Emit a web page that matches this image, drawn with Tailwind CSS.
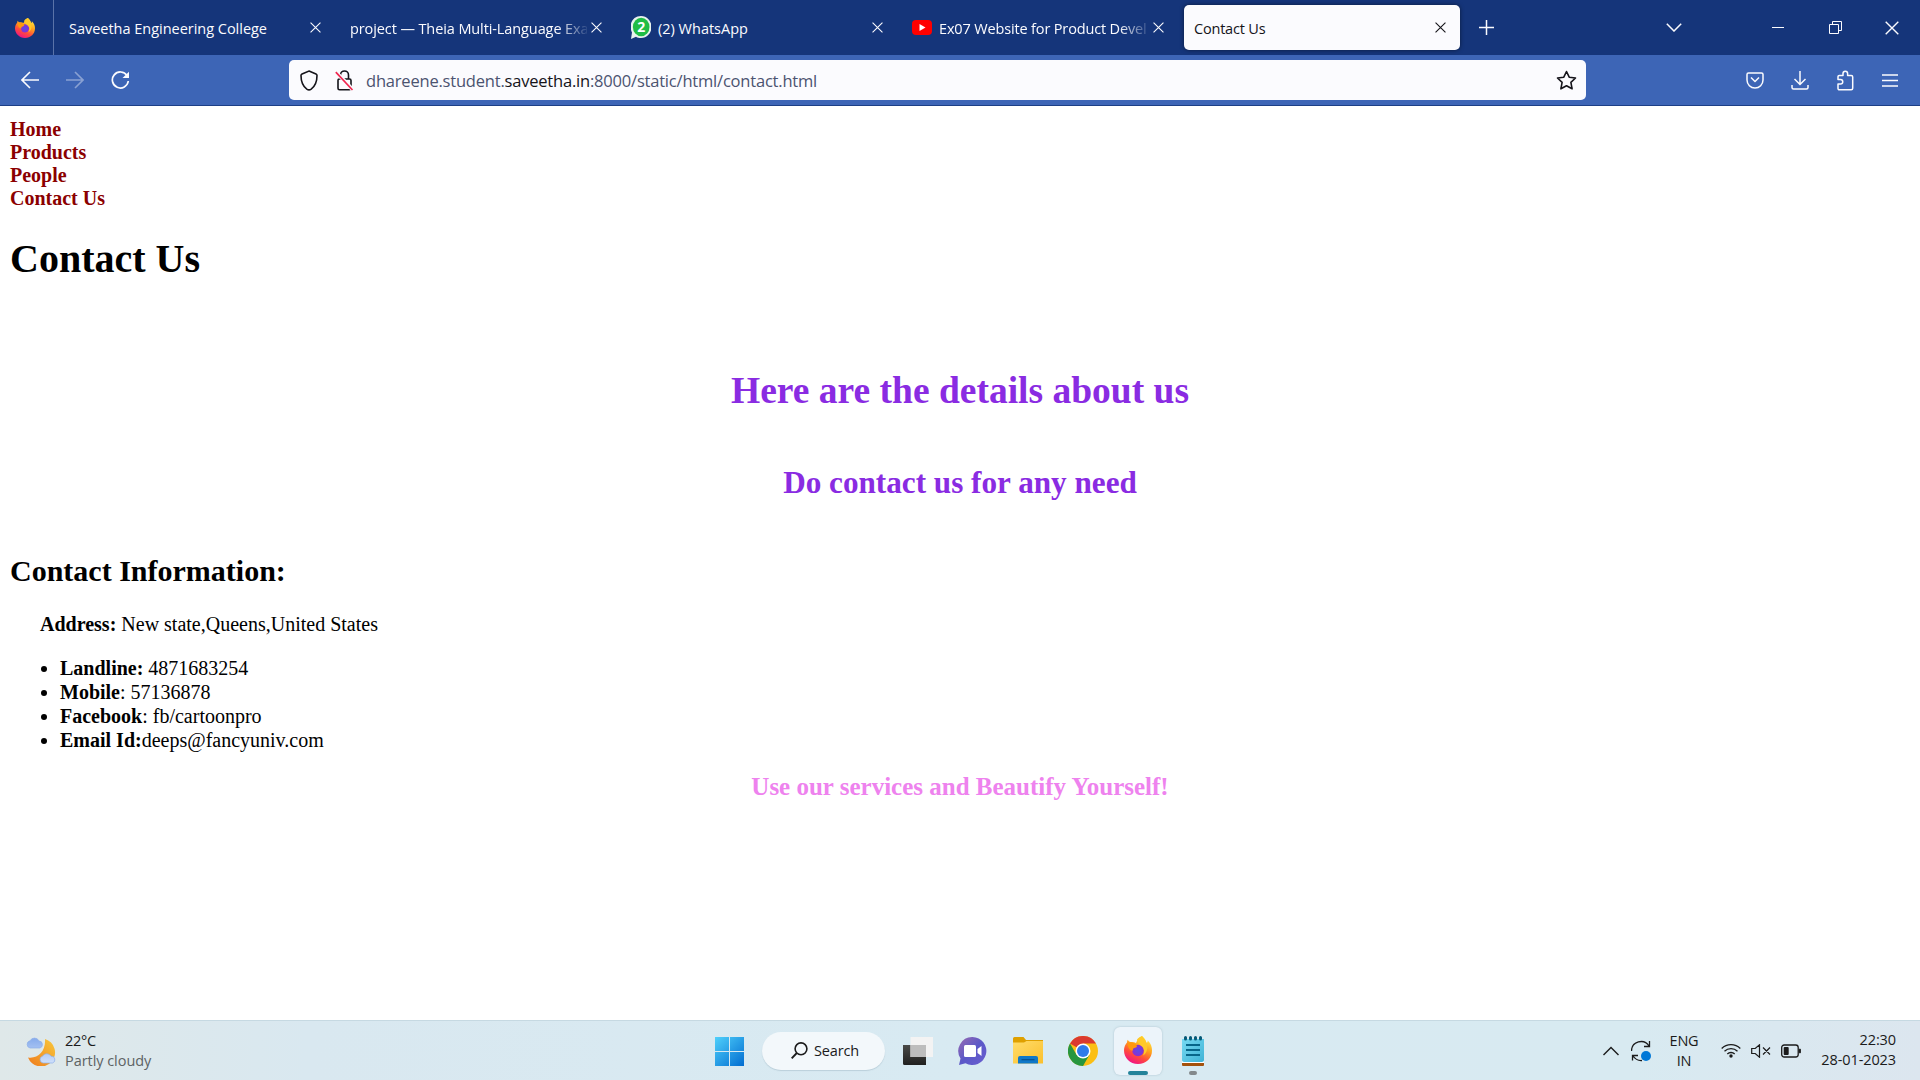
<!DOCTYPE html>
<html lang="en">
<head>
<meta charset="utf-8">
<title>Contact Us</title>
<script src="https://cdn.jsdelivr.net/npm/@tailwindcss/browser@4"></script>
</head>
<body class="flex h-screen w-screen flex-col overflow-hidden bg-white font-['Open_Sans',sans-serif] text-black">

<svg class="absolute size-0">
  <defs>
    <linearGradient id="fo" x1=".8" y1="0" x2=".3" y2="1"><stop offset="0" stop-color="#fff44f"/><stop offset=".4" stop-color="#ffa41c"/><stop offset=".7" stop-color="#ff4a3c"/><stop offset="1" stop-color="#f0108a"/></linearGradient>
    <radialGradient id="fp"><stop offset="0" stop-color="#5b4be8"/><stop offset="1" stop-color="#8a2fd0"/></radialGradient>
    <linearGradient id="win" gradientUnits="userSpaceOnUse" x1="1" y1="1" x2="28" y2="30"><stop offset="0" stop-color="#4fd0fb"/><stop offset="1" stop-color="#0470d2"/></linearGradient>
    <linearGradient id="chat" x1="0" y1="0" x2="1" y2="1"><stop offset="0" stop-color="#9a6bb0"/><stop offset=".5" stop-color="#5b58c8"/><stop offset="1" stop-color="#6a5fd0"/></linearGradient>
    <linearGradient id="fold" x1="0" y1="0" x2="1" y2="1"><stop offset="0" stop-color="#ffdc6a"/><stop offset="1" stop-color="#fbc02d"/></linearGradient>
    <linearGradient id="moon" x1="1" y1="0" x2="0" y2="1"><stop offset="0" stop-color="#f8c93c"/><stop offset="1" stop-color="#ef7a1c"/></linearGradient>
    <linearGradient id="cloud" x1="0" y1="0" x2="0" y2="1"><stop offset="0" stop-color="#86abec"/><stop offset="1" stop-color="#cfe0fb"/></linearGradient>
    <linearGradient id="note" x1="0" y1="0" x2="1" y2="1"><stop offset="0" stop-color="#76d9f2"/><stop offset="1" stop-color="#3fb3d6"/></linearGradient>
    <linearGradient id="tvd" x1="0" y1="0" x2="0" y2="1"><stop offset="0" stop-color="#4a4a48"/><stop offset="1" stop-color="#20201f"/></linearGradient>
    <symbol id="x" viewBox="0 0 10 10"><path d="M.5.5l9 9M9.500.5l-9 9" fill="none" stroke="currentColor" stroke-width="1"/></symbol>
    <symbol id="firefox" viewBox="0 0 28 28">
      <path d="M18 0c3 2.500 4 4.500 4.500 7 1-.5 1.200-1.500 1.200-2.500C27 7.500 28 11 28 14.500 28 22.500 22 28 14 28S0 22 0 14.500C0 11 1.500 8 3 6.500c0-1 .3-2 .8-2.700.5 1.300 1.500 2 2.700 2.300 2-.3 4 0 5.500 1 1-3 3-5.500 6-7.100z" fill="url(#fo)"/>
      <circle cx="14" cy="14.500" r="5.800" fill="url(#fp)"/>
      <path d="M3.500 7.500c3-2 7-1 9 1.700 1 1.200 0 2.300-1.500 2.600-2 .3-2.500 1.500-1.800 2.700C6 15 4 12 3.500 7.500z" fill="#ff980e"/>
      <path d="M13 3.500C14 2 16 .7 18 0c2 2.500 4.500 5 5.200 9 .7 5-1.200 9-4.200 10.500 2-3.500 1.200-7.500-1.500-9.500-2.500-1.500-4-3.500-4.500-6.500z" fill="#ffc928"/>
    </symbol>
  </defs>
</svg>

<!-- Tab strip -->
<header class="flex h-[55px] shrink-0 items-center bg-[#15357a] text-[14.5px] text-[#fbfbfe]">
  <div class="flex h-full w-[54px] items-center border-r border-[#5a73a8] pl-[15px]"><svg class="size-5"><use href="#firefox"/></svg></div>
  <div class="ml-1.5 flex items-center">
    <div class="flex w-[281px] items-center pl-[9px]">
      <span class="w-[236px] pt-0.5 whitespace-nowrap tracking-[-0.02px]">Saveetha Engineering College</span>
      <svg class="ml-[5px] size-[11px]"><use href="#x"/></svg>
    </div>
    <div class="flex w-[281px] items-center pl-[9px]">
      <span class="w-[237px] overflow-hidden pt-0.5 whitespace-nowrap tracking-[-0.1px] [mask-image:linear-gradient(90deg,#000_208px,transparent_240px)]">project — Theia Multi-Language Exa</span>
      <svg class="ml-1 size-[11px]"><use href="#x"/></svg>
    </div>
    <div class="flex w-[281px] items-center pl-[9px]">
      <svg class="mr-[7px] h-6 w-5" viewBox="0 0 20 24"><path d="M10 0a10.500 11 0 0 1 0 22c-2 0-3.500-.3-5-1.300L0 23l1-6.500C-3 8 2 0 10 0z" fill="#e8f2ee"/><ellipse cx="10.200" cy="11" rx="8.300" ry="9.300" fill="#20bd45"/><text x="6.300" y="16" font-size="14" font-weight="700" fill="#fff">2</text></svg>
      <span class="w-[209px] pt-0.5 whitespace-nowrap">(2) WhatsApp</span>
      <svg class="ml-[5px] size-[11px]"><use href="#x"/></svg>
    </div>
    <div class="flex w-[281px] items-center pl-[9px]">
      <svg class="mr-[7px] h-[15px] w-5" viewBox="0 0 20 15"><rect width="20" height="15" rx="4" fill="#f00"/><path d="M7.500 4l6 3.500-6 3.500z" fill="#fff"/></svg>
      <span class="w-[210px] overflow-hidden pt-0.5 whitespace-nowrap tracking-[-0.15px] [mask-image:linear-gradient(90deg,#000_180px,transparent_213px)]">Ex07 Website for Product Devel</span>
      <svg class="ml-1 size-[11px]"><use href="#x"/></svg>
    </div>
    <div class="flex h-[45px] w-[276px] items-center rounded-[5px] bg-[#fbfbfe] pl-2.5 text-[#15141a] shadow-[0_0_4px_rgba(0,0,0,.5)]">
      <span class="w-[236px] pt-0.5 tracking-[-0.2px]">Contact Us</span>
      <svg class="ml-[5px] size-[11px]"><use href="#x"/></svg>
    </div>
  </div>
  <svg class="ml-[19px] size-[15px]" viewBox="0 0 15 15"><path d="M7.500 0v15M0 7.500h15" stroke="currentColor" stroke-width="1.500"/></svg>
  <svg class="ml-[172px] h-[9px] w-4" viewBox="0 0 16 9"><path d="M.8.8L8 8 15.200.8" fill="none" stroke="currentColor" stroke-width="1.500"/></svg>
  <svg class="ml-[90px] h-px w-3" viewBox="0 0 12 1"><path d="M0 .5h12" stroke="currentColor"/></svg>
  <svg class="ml-[45px] size-[13px]" viewBox="0 0 13 13"><path d="M.5 3.500h9v9h-9zM3.500 3.500v-3h9v9h-3" fill="none" stroke="currentColor"/></svg>
  <svg class="ml-[43px] size-[14px]"><use href="#x"/></svg>
</header>

<!-- Navigation toolbar -->
<div class="flex h-[51px] shrink-0 items-center border-b border-[#1d3f86] bg-[#3d65b6] text-[#fbfbfe]">
  <svg class="ml-[21px] size-[18px]" viewBox="0 0 18 18"><path d="M18 9H1M9 1L1 9l8 8" fill="none" stroke="currentColor" stroke-width="1.600"/></svg>
  <svg class="ml-[27px] size-[18px] opacity-40" viewBox="0 0 18 18"><path d="M0 9h17M9 1l8 8-8 8" fill="none" stroke="currentColor" stroke-width="1.600"/></svg>
  <svg class="ml-[27px] size-[19px]" viewBox="0 0 19 19"><path d="M16 4.500A8 8 0 1 0 17.300 10" fill="none" stroke="currentColor" stroke-width="1.700"/><path d="M18 .8V7h-6.500z" fill="currentColor"/></svg>
  <div class="ml-[159px] flex h-10 w-[1297px] items-center rounded-[5px] bg-[#fbfbfe] text-[#15141a]">
    <svg class="ml-[11px] h-[21px] w-[18px]" viewBox="0 0 18 21"><path d="M9 1l7 3c.7.300 1 .8 1 1.600 0 6-1.500 10.400-5.800 13.600-1.500 1-2.900 1-4.400 0C2.500 16 1 11.600 1 5.600 1 4.800 1.300 4.300 2 4z" fill="none" stroke="currentColor" stroke-width="1.600"/></svg>
    <svg class="ml-[17px] h-[21px] w-[19px]" viewBox="0 0 19 21"><path d="M5.500 8.500V5a4 4 0 0 1 8 0v3.500M4 9h10.500a1.500 1.500 0 0 1 1.500 1.500v7.800a1.500 1.500 0 0 1-1.500 1.500h-10a1.500 1.500 0 0 1-1.500-1.500v-7.800A1.500 1.500 0 0 1 4 9" fill="none" stroke="currentColor" stroke-width="1.600"/><path d="M1 2l17 18" stroke="#fbfbfe" stroke-width="4"/><path d="M.8 2.200L17.500 20" stroke="#f0264f" stroke-width="1.700"/></svg>
    <span class="ml-3 w-[1190px] shrink-0 pt-[3px] text-[16.5px] tracking-[-0.2px] text-[#4b5370]">dhareene.student.<span class="text-[#15141a]">saveetha.in</span>:8000/static/html/contact.html</span>
    <svg class="h-[21px] w-[21px] shrink-0" viewBox="0 0 21 21"><path d="M10.500 1.500l2.700 5.700 6.300.8-4.600 4.300 1.200 6.500-5.600-3.100-5.600 3.100 1.200-6.500L1.500 8l6.300-.8z" fill="none" stroke="currentColor" stroke-width="1.600" stroke-linejoin="round"/></svg>
  </div>
  <svg class="ml-40 h-[17px] w-[18px]" viewBox="0 0 18 17"><path d="M2.500 1h13A1.500 1.500 0 0 1 17 2.500V8A8 8 0 0 1 1 8V2.500A1.500 1.500 0 0 1 2.500 1zM5 5.500l4 4 4-4" fill="none" stroke="currentColor" stroke-width="1.500" stroke-linejoin="round"/></svg>
  <svg class="ml-[27px] h-[19px] w-[18px]" viewBox="0 0 18 19"><path d="M9 0v13M3.500 8L9 13.500 14.500 8M1 14v2.500A1.500 1.500 0 0 0 2.500 18h13a1.500 1.500 0 0 0 1.500-1.500V14" fill="none" stroke="currentColor" stroke-width="1.500"/></svg>
  <svg class="ml-[27px] h-[21px] w-[18px]" viewBox="0 0 18 21"><path d="M2 9.500V6.800A1.300 1.300 0 0 1 3.300 5.500H7V3.500a2.300 2.300 0 0 1 4.600 0v2h3.600a1.500 1.500 0 0 1 1.500 1.500v11.300a1.500 1.500 0 0 1-1.500 1.500H3.300A1.300 1.300 0 0 1 2 18.500V14h2.500a2.200 2.200 0 0 0 0-4.500z" fill="none" stroke="currentColor" stroke-width="1.500" stroke-linejoin="round"/></svg>
  <svg class="ml-[28px] h-[13px] w-4" viewBox="0 0 16 13"><path d="M0 1h16M0 6.500h16M0 12h16" stroke="currentColor" stroke-width="1.400"/></svg>
</div>

<!-- Page -->
<main class="flex h-[914px] shrink-0 flex-col px-2.5 font-['Liberation_Serif',serif] text-xl leading-[23px]">
  <nav class="mt-3 flex flex-col font-bold text-[#8b0000]"><a>Home</a><a>Products</a><a>People</a><a>Contact Us</a></nav>
  <h1 class="mt-[26px] text-[40px] leading-[46px] font-bold">Contact Us</h1>
  <h1 class="mt-[87px] text-center text-[37.5px] leading-[44px] font-bold text-[#8a2be2]">Here are the details about us</h1>
  <h2 class="mt-[52px] text-center text-[31.2px] leading-9 font-bold text-[#8a2be2]">Do contact us for any need</h2>
  <h2 class="mt-[53px] text-3xl leading-[34px] font-bold">Contact Information:</h2>
  <p class="mt-6 ml-[30px] leading-6"><b>Address:</b> New state,Queens,United States</p>
  <ul class="mt-5 ml-[50px] list-disc leading-6">
    <li><b>Landline:</b> 4871683254</li>
    <li><b>Mobile</b>: 57136878</li>
    <li><b>Facebook</b>: fb/cartoonpro</li>
    <li><b>Email Id:</b>deeps@fancyuniv.com</li>
  </ul>
  <h3 class="mt-[21px] text-center text-[25px] leading-7 font-bold text-[#ee82ee]">Use our services and Beautify Yourself!</h3>
</main>

<!-- Taskbar -->
<footer class="flex h-[60px] shrink-0 items-center border-t border-[#c6d9e2] bg-[linear-gradient(90deg,#dfe8e9_0%,#d9e8f0_16%,#d8eaf2_50%,#d8eaf1_85%,#dce6ef_100%)] text-[14.5px] leading-5 text-[#1b1b1b]">
  <div class="flex w-[714px] items-center pl-[26px]">
    <svg class="h-[30px] w-[30px]" viewBox="0 0 30 30"><path d="M19 3a14 14 0 1 1-17 18.500C12 23 20 15 19 3z" fill="url(#moon)"/><path d="M4 12a3.700 3.700 0 0 1 0-7.200A5 5 0 0 1 13 5a3.600 3.600 0 0 1 1 7zM17 27a3.500 3.500 0 0 1-.5-6.800 5 5 0 0 1 8.500 0 3.500 3.500 0 0 1 1.500 6.800z" fill="url(#cloud)" stroke="#8eafe8" stroke-width=".7"/></svg>
    <div class="ml-[9px] flex flex-col"><span class="tracking-[-0.3px]">22°C</span><span class="tracking-[-0.05px] text-[#5d6364]">Partly cloudy</span></div>
  </div>
  <svg class="h-[30px] w-[30px]" viewBox="0 0 30 30"><path d="M1 1h14v14H1zM16 1h14v14H16zM1 16h14v14H1zM16 16h14v14H16z" fill="url(#win)"/></svg>
  <div class="ml-[18px] flex h-[38px] w-[123px] items-center rounded-full bg-[#f3f8fb] pl-[29px] shadow-[0_1px_1px_rgba(120,150,165,.3)]">
    <svg class="size-[17px]" viewBox="0 0 17 17"><circle cx="10" cy="6.800" r="5.900" fill="none" stroke="#1b1b1b" stroke-width="1.600"/><path d="M5.800 11L.7 16.300" stroke="#1b1b1b" stroke-width="1.900"/></svg>
    <span class="ml-[6px] tracking-[-0.15px]">Search</span>
  </div>
  <svg class="ml-[18px] h-7 w-[30px]" viewBox="0 0 30 28"><path d="M0 8h23v20H1.500A1.500 1.500 0 0 1 0 26.500z" fill="url(#tvd)"/><path d="M7.500 0H30v20H7.500z" fill="#f3f3f3"/><path d="M7.500 8H23v12H7.500z" fill="#bdbdbd"/></svg>
  <svg class="ml-[25px] h-7 w-[29px]" viewBox="0 0 29 28"><path d="M14.500 0a14 14 0 1 1-7 26.200L1 28l1.500-6.500A14 14 0 0 1 14.500 0z" fill="url(#chat)"/><rect x="6" y="8" width="12" height="12" rx="1.500" fill="#fff"/><path d="M19.500 12l4-3v10l-4-3z" fill="#fff"/></svg>
  <svg class="ml-[26px] h-[27px] w-[30px]" viewBox="0 0 30 27"><path d="M0 1.500A1.500 1.500 0 0 1 1.500 0h9l2.500 3h17v8H0z" fill="#dfa000"/><path d="M0 5.500h11L13.500 4H30v22.500H0z" fill="url(#fold)"/><path d="M5 26.500V21a2 2 0 0 1 2-2h16a2 2 0 0 1 2 2v5.500z" fill="#0f78c8"/><path d="M8.500 22.700h13" stroke="#07508e" stroke-width="1.200"/></svg>
  <svg class="ml-[25px] size-[30px]" viewBox="0 0 30 30"><circle cx="15" cy="15" r="15" fill="#fbbf13"/><path d="M15 15L2 7.500A15 15 0 0 1 28 7.500H15z" fill="#db3a2f"/><path d="M2 7.500A15 15 0 0 0 15 30l6.500-11.200L15 15l-6.500 3.700z" fill="#27963f"/><circle cx="15" cy="15" r="7.500" fill="#fff"/><circle cx="15" cy="15" r="6" fill="#2f7bea"/></svg>
  <div class="ml-4 flex h-12 w-12 flex-col items-center rounded-md bg-[#ecf4fa] pt-[9px] shadow-[0_0_2px_rgba(120,150,165,.5)]">
    <svg class="size-[28px] shrink-0"><use href="#firefox"/></svg>
    <span class="mt-[7px] h-1 w-5 shrink-0 rounded-full bg-[#24839a]"></span>
  </div>
  <div class="ml-5 flex h-12 w-[22px] flex-col items-center pt-[9px]">
    <svg class="h-[30px] w-[22px] shrink-0" viewBox="0 0 22 30"><rect y="25" width="22" height="5" rx="1" fill="#a4520d"/><rect y="25" width="22" height="2" fill="#fff"/><path d="M0 3h22v21a2 2 0 0 1-2 2H2a2 2 0 0 1-2-2z" fill="url(#note)"/><path d="M4 9h14M4 14h14M4 19h14" stroke="#07668a" stroke-width="1.800"/><path d="M3.500 1.500v1.500M8.500 1.500v1.500M13.500 1.500v1.500M18.500 1.500v1.500" stroke="#075a78" stroke-width="3" stroke-linecap="round"/></svg>
    <span class="mt-[5px] h-1 w-2 shrink-0 rounded-full bg-[#83898c]"></span>
  </div>
  <div class="ml-[399px] flex items-center">
    <svg class="h-[10px] w-4" viewBox="0 0 16 10"><path d="M.5 9L8 1.500 15.500 9" fill="none" stroke="currentColor" stroke-width="1.400"/></svg>
    <svg class="ml-[12px] h-[22px] w-5" viewBox="0 0 20 22"><path d="M.5 11A9.500 9.500 0 0 1 18 6M18.500 1v5.500H13M1.500 20.500V15.500H7M2 16c2 3 5 4.800 9 4.500" fill="none" stroke="currentColor" stroke-width="1.300"/><circle cx="15" cy="16" r="5" fill="#0078d7"/></svg>
    <div class="ml-[18px] flex w-[30px] flex-col items-center tracking-[-0.2px]"><span>ENG</span><span>IN</span></div>
    <svg class="ml-[22px] h-[15px] w-5" viewBox="0 0 20 15"><path d="M.7 5.500a13 13 0 0 1 18.600 0M3.500 8.200a9.300 9.300 0 0 1 13 0M6.300 11a5.300 5.300 0 0 1 7.400 0" fill="none" stroke="currentColor" stroke-width="1.300"/><circle cx="10" cy="13" r="1.700" fill="currentColor"/></svg>
    <svg class="ml-[10px] h-[14px] w-5" viewBox="0 0 20 14"><path d="M.7 4.500h3.500L8.500.8v12.400L4.200 9.500H.7zM12 3.500l7 7M19 3.500l-7 7" fill="none" stroke="currentColor" stroke-width="1.200"/></svg>
    <svg class="ml-[10px] h-[14px] w-5" viewBox="0 0 20 14"><rect x=".7" y="1" width="16.500" height="12" rx="2.500" fill="none" stroke="currentColor" stroke-width="1.300"/><rect x="2.700" y="3" width="5" height="8" rx="1" fill="currentColor"/><path d="M18 5.200h1.500v3.600H18z" fill="currentColor" stroke="currentColor" stroke-width=".8"/></svg>
    <div class="mb-px flex w-[95px] flex-col items-end whitespace-nowrap tracking-[-0.1px]"><span>22:30</span><span>28-01-2023</span></div>
  </div>
</footer>
</body>
</html>
